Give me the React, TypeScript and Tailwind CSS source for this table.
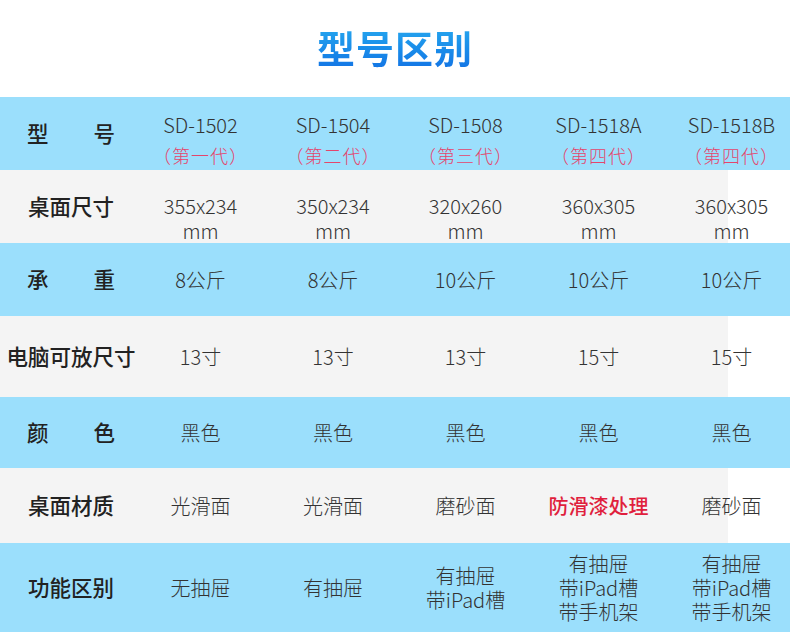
const font = { fontFamily: '"Noto Sans CJK SC", "Noto Sans", sans-serif' }

type Row = {
  label: string
  spread?: boolean
  cells: React.ReactNode[]
  blue: boolean
  h: string
  pad?: string
}

const models = [
  ['SD-1502', '（第一代）'],
  ['SD-1504', '（第二代）'],
  ['SD-1508', '（第三代）'],
  ['SD-1518A', '（第四代）'],
  ['SD-1518B', '（第四代）'],
]

const size = (a: string) => (
  <div className="flex flex-col items-center leading-[25px]">
    <span>{a}</span>
    <span>mm</span>
  </div>
)

const lines = (items: string[]) => (
  <div className="flex flex-col items-center leading-[24px]">
    {items.map((t) => (
      <span key={t}>{t}</span>
    ))}
  </div>
)

const rows: Row[] = [
  {
    label: '桌面尺寸',
    blue: false,
    h: 'h-[73px]',
    pad: 'pt-[22px]',
    cells: ['355x234', '350x234', '320x260', '360x305', '360x305'].map(size),
  },
  { label: '承重', spread: true, blue: true, h: 'h-[73px]', cells: ['8公斤', '8公斤', '10公斤', '10公斤', '10公斤'] },
  { label: '电脑可放尺寸', blue: false, h: 'h-[81px]', cells: ['13寸', '13寸', '13寸', '15寸', '15寸'] },
  { label: '颜色', spread: true, blue: true, h: 'h-[71px]', cells: ['黑色', '黑色', '黑色', '黑色', '黑色'] },
  {
    label: '桌面材质',
    blue: false,
    h: 'h-[75px]',
    cells: [
      '光滑面',
      '光滑面',
      '磨砂面',
      <span className="font-medium text-[#e01f3d]">防滑漆处理</span>,
      '磨砂面',
    ],
  },
  {
    label: '功能区别',
    blue: true,
    h: 'h-[89px]',
    cells: [
      '无抽屉',
      '有抽屉',
      lines(['有抽屉', '带iPad槽']),
      lines(['有抽屉', '带iPad槽', '带手机架']),
      lines(['有抽屉', '带iPad槽', '带手机架']),
    ],
  },
]

function Label({ text, spread }: { text: string; spread?: boolean }) {
  return (
    <div className="flex items-center justify-center whitespace-nowrap pl-[8px] text-[21.5px] font-medium text-[#222]">
      {spread ? (
        <span className="flex w-[88px] justify-between">
          {text.split('').map((c) => (
            <span key={c}>{c}</span>
          ))}
        </span>
      ) : (
        text
      )}
    </div>
  )
}

const grid = 'grid grid-cols-[134px_133px_132px_133px_133px_133px]'

export default function App() {
  return (
    <div className="w-[790px] h-[632px] overflow-hidden bg-white" style={font}>
      <div className="flex h-[97px] items-center justify-center">
        <h1 className="bg-gradient-to-b from-[#2cb0f0] to-[#1468e2] bg-clip-text pb-[4px] text-[38px] font-bold tracking-[1px] text-transparent">
          型号区别
        </h1>
      </div>

      <div className={`${grid} h-[73px] bg-[#9bdffc]`}>
        <Label text="型号" spread />
        {models.map(([m, g]) => (
          <div key={m} className="flex flex-col items-center justify-center pt-[12px] font-light">
            <span className="text-[20px] leading-[30px] text-[#333]">{m}</span>
            <span className="text-[18px] leading-[30px] tracking-[1px] text-[#e4456c]">{g}</span>
          </div>
        ))}
      </div>

      {rows.map((r) => (
        <div
          key={r.label}
          className={`${grid} ${r.h} ${
            r.blue ? 'bg-[#9bdffc]' : 'bg-[linear-gradient(to_right,#f4f4f4_728px,#ffffff_728px)]'
          }`}
        >
          <Label text={r.label} spread={r.spread} />
          {r.cells.map((c, i) => (
            <div
              key={i}
              className={`flex items-center justify-center text-[20px] font-light text-[#333] ${r.pad ?? ''}`}
            >
              {c}
            </div>
          ))}
        </div>
      ))}
    </div>
  )
}
